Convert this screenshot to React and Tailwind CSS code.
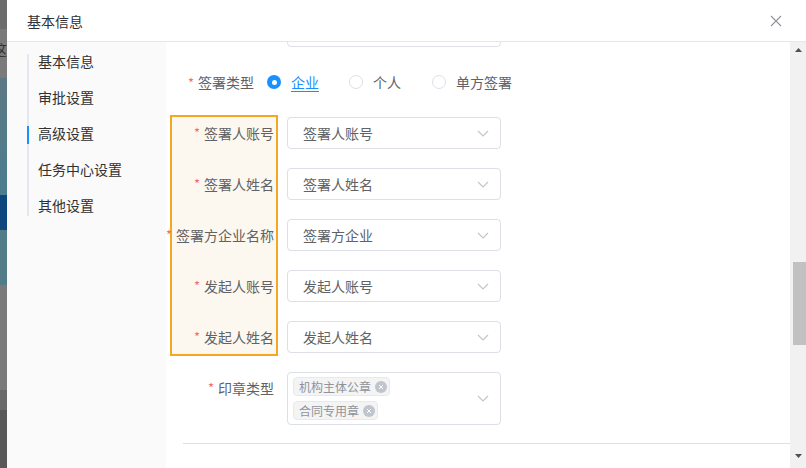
import React from 'react';

const Chevron = () => (
  <svg width="12" height="7" viewBox="0 0 12 7" fill="none" className="shrink-0">
    <path d="M1 1l5 5 5-5" stroke="#c0c4cc" strokeWidth="1.1" />
  </svg>
);

const Req = () => <span className="text-[#f56c6c] mr-[4px] text-[13px]">*</span>;

function SelectBox({ text }) {
  return (
    <div className="w-[214px] h-[32px] border border-[#dcdfe6] rounded-[4px] bg-white flex items-center justify-between pl-[15px] pr-[11px] text-[14px] text-[#606266]">
      <span>{text}</span>
      <Chevron />
    </div>
  );
}

function Radio({ checked, label, className }) {
  return (
    <div className={`flex items-center ${className || ''}`}>
      {checked ? (
        <span className="w-[14px] h-[14px] rounded-full bg-[#1890ff] flex items-center justify-center">
          <span className="w-[5px] h-[5px] rounded-full bg-white" />
        </span>
      ) : (
        <span className="w-[14px] h-[14px] rounded-full border border-[#dcdfe6] bg-white" />
      )}
      <span className={`ml-[10px] text-[14px] ${checked ? 'text-[#1890ff] underline underline-offset-[3px]' : 'text-[#606266]'}`}>
        {label}
      </span>
    </div>
  );
}

function Tag({ text }) {
  return (
    <div className="h-[19px] flex items-center bg-[#f4f4f5] border border-[#e9e9eb] rounded-[4px] pl-[5px] pr-[2px] text-[12px] text-[#909399]">
      <span>{text}</span>
      <span className="ml-[4px] w-[12px] h-[12px] rounded-full bg-[#c0c4cc] flex items-center justify-center">
        <svg width="6" height="6" viewBox="0 0 6 6">
          <path d="M1 1l4 4M5 1L1 5" stroke="#fff" strokeWidth="1" />
        </svg>
      </span>
    </div>
  );
}

const navItems = ['基本信息', '审批设置', '高级设置', '任务中心设置', '其他设置'];
const boxRows = [
  ['签署人账号', '签署人账号'],
  ['签署人姓名', '签署人姓名'],
  ['签署方企业名称', '签署方企业'],
  ['发起人账号', '发起人账号'],
  ['发起人姓名', '发起人姓名'],
];

export default function App() {
  return (
    <div className="w-[806px] h-[468px] flex overflow-hidden font-['Noto_Sans_CJK_SC',sans-serif] leading-[20px]">
      {/* backdrop strip */}
      <div className="w-[7px] flex flex-col shrink-0">
        <div className="h-[29px] bg-[#6c6c6c]" />
        <div className="h-[49px] bg-[#7a7a7a] overflow-hidden pt-[12px]">
          <span className="block -ml-[7px] text-[14px] leading-[16px] text-[#333]">这</span>
        </div>
        <div className="h-[117px] bg-gradient-to-b from-[#5c7884] to-[#4a7d8f]" />
        <div className="h-[35px] bg-[#0e477b]" />
        <div className="h-[55px] bg-[#527c88]" />
        <div className="h-[105px] bg-[#7a7a7a]" />
        <div className="h-[20px] bg-[#696969]" />
        <div className="flex-1 bg-[#585858]" />
      </div>

      {/* dialog */}
      <div className="flex-1 flex flex-col bg-white">
        <div className="h-[42px] shrink-0 border-b border-[#e4e7ed] flex items-center justify-between pl-[20px] pr-[24px]">
          <span className="text-[14px] text-[#303133]">基本信息</span>
          <svg width="12" height="12" viewBox="0 0 12 12">
            <path d="M1 1l10 10M11 1L1 11" stroke="#909399" strokeWidth="1.1" />
          </svg>
        </div>

        <div className="flex flex-1 min-h-0">
          {/* nav */}
          <div className="w-[159px] shrink-0 bg-[#fafafa] pt-[12px] pl-[20px]">
            <div className="border-l-2 border-[#e4e7ed] flex flex-col gap-[18px]">
              {navItems.map((t) => (
                <div
                  key={t}
                  className={`-ml-[2px] border-l-2 pl-[9px] h-[18px] leading-[14px] text-[14px] text-[#303133] ${
                    t === '高级设置' ? 'border-[#1890ff]' : 'border-transparent'
                  }`}
                >
                  {t}
                </div>
              ))}
            </div>
          </div>

          {/* content */}
          <div className="flex-1 min-w-0 overflow-hidden flex flex-col pl-[4px]">
            <div className="ml-[117px] -mt-[27px] w-[214px] h-[32px] border border-[#dcdfe6] rounded-[4px] shrink-0" />

            <div className="mt-[19px] h-[32px] flex items-center shrink-0">
              <div className="w-[84px] text-right text-[14px] text-[#606266]">
                <Req />签署类型
              </div>
              <Radio checked label="企业" className="ml-[13px]" />
              <Radio label="个人" className="ml-[30px]" />
              <Radio label="单方签署" className="ml-[31px]" />
            </div>

            <div className="mt-[17px] flex gap-[9px] shrink-0">
              <div className="w-[108px] border-2 border-[#f5a623] bg-[#fdf8ef] flex flex-col gap-[19px] pr-[2px] pb-[1px]">
                {boxRows.map(([l]) => (
                  <div key={l} className="h-[32px] flex items-center justify-end text-[14px] text-[#606266] whitespace-nowrap">
                    <Req />{l}
                  </div>
                ))}
              </div>
              <div className="flex flex-col gap-[19px] pt-[2px]">
                {boxRows.map(([l, p]) => (
                  <SelectBox key={l} text={p} />
                ))}
              </div>
            </div>

            <div className="mt-[16px] flex shrink-0">
              <div className="w-[104px] h-[32px] flex items-center justify-end text-[14px] text-[#606266]">
                <Req />印章类型
              </div>
              <div className="ml-[13px] w-[214px] h-[53px] border border-[#dcdfe6] rounded-[4px] flex items-center justify-between pl-[5px] pr-[11px]">
                <div className="flex flex-col items-start gap-[5px]">
                  <Tag text="机构主体公章" />
                  <Tag text="合同专用章" />
                </div>
                <Chevron />
              </div>
            </div>

            <div className="mt-[18px] ml-[13px] h-px bg-[#dcdfe6] shrink-0" />
          </div>

          {/* scrollbar */}
          <div className="w-[16px] shrink-0 bg-[#f1f1f1] flex flex-col items-center">
            <div className="h-[16px] flex items-center justify-center">
              <svg width="7" height="4" viewBox="0 0 7 4"><path d="M0 4h7L3.5 0z" fill="#505050" /></svg>
            </div>
            <div className="mt-[204px] w-[13px] h-[83px] bg-[#c1c1c1] ml-[2px]" />
            <div className="flex-1" />
            <div className="h-[14px] flex items-start justify-center">
              <svg width="7" height="4" viewBox="0 0 7 4"><path d="M0 0h7L3.5 4z" fill="#505050" /></svg>
            </div>
          </div>
        </div>
      </div>
    </div>
  );
}
